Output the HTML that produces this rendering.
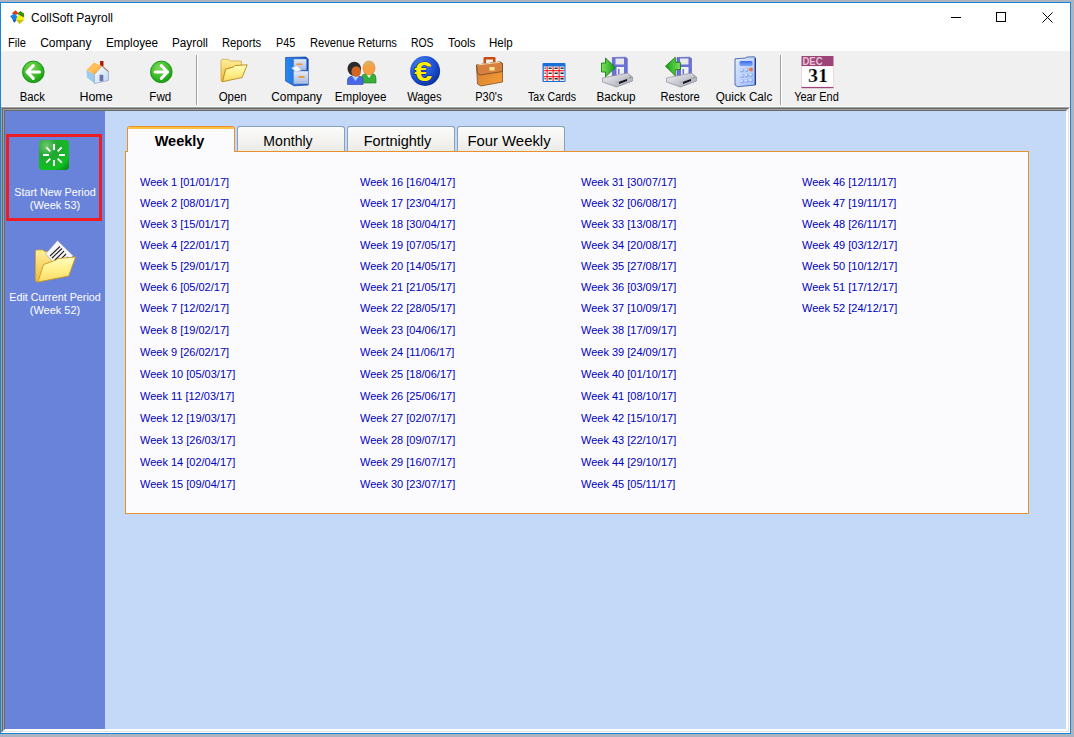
<!DOCTYPE html>
<html><head><meta charset="utf-8">
<style>
*{margin:0;padding:0;box-sizing:border-box}
html,body{width:1074px;height:737px;overflow:hidden}
body{position:relative;background:#adb4bf;font-family:"Liberation Sans",sans-serif;color:#000}
.abs{position:absolute}
#win{position:absolute;left:0;top:2px;width:1071px;height:732px;border:1px solid #1883d7;background:#fff}
#tb{position:absolute;left:1px;top:51px;width:1069px;height:55px;background:#f0f0f0}
.mi{position:absolute;top:36px;font-size:12px;white-space:nowrap;line-height:14px;transform-origin:0 0}
.btn{position:absolute;top:0;width:64px;height:56px}
.btn svg{position:absolute;left:16px;top:4px}
.lbl{position:absolute;top:38px;left:0;width:64px;text-align:center;font-size:12px;line-height:14px;white-space:nowrap}
.lbl span{display:inline-block;transform-origin:50% 0}
.sep{position:absolute;top:4px;width:2px;height:50px;border-left:1px solid #a0a0a0;border-right:1px solid #fff}
#client{position:absolute;left:1px;top:106px;width:1069px;height:627px}
#side{position:absolute;left:5px;top:111px;width:100px;height:618px;background:#6a83da}
#main{position:absolute;left:105px;top:111px;width:961px;height:618px;background:#c4d8f8}
.st{position:absolute;color:#fff;font-size:11px;line-height:13px;text-align:center;white-space:nowrap}
.tab{position:absolute;top:126px;height:26px;width:108px;font-size:14.5px;text-align:center;line-height:16px;padding-top:9px}
#panel{position:absolute;left:125px;top:151px;width:904px;height:363px;border:1px solid #e8912a;background:#fbfbfd}
.tt{font-size:14.5px;line-height:17px;text-align:center;white-space:nowrap}
.wk{position:absolute;font-size:11px;line-height:13px;color:#0000c0;white-space:nowrap}
</style></head><body>
<div id="win"></div>
<!-- title bar -->
<svg class="abs" style="left:9px;top:9px" width="16" height="16" viewBox="0 0 16 16">
 <path d="M2.8 4.4 L6.5 1.2 L9.3 4 L7.3 5.9 Z" fill="#dc3a10"/>
 <path d="M8.1 4.8 L11.4 2 L15 4.6 L15 7.3 L13.6 8.2 Z" fill="#3c8a10"/>
 <path d="M13.6 8.2 L15 7.3 L15.3 8.2 Z" fill="#403010"/>
 <path d="M1.2 7.3 L5.2 4.4 L8.6 7.7 L7.3 11.3 L5.2 13.8 L3.6 10.5 Z" fill="#1d80f0"/>
 <path d="M3.6 10.5 L7.3 11.3 L5.2 13.8 Z" fill="#1a58a8"/>
 <path d="M7.2 9.8 L9.3 5.8 L14.6 8.2 L15 10.9 L10.5 15 Z" fill="#f4f010"/>
 <path d="M7.2 11 L15 10.9 L10.5 15 Z" fill="#ccc020"/>
</svg>
<div class="abs" style="left:31px;top:11px;font-size:12px;line-height:14px;white-space:nowrap">CollSoft Payroll</div>
<!-- window controls -->
<div class="abs" style="left:951px;top:17px;width:10px;height:1px;background:#000"></div>
<div class="abs" style="left:996px;top:12px;width:10px;height:10px;border:1px solid #000"></div>
<svg class="abs" style="left:1042px;top:12px" width="11" height="11" viewBox="0 0 11 11"><path d="M0.5 0.5 L10.5 10.5 M10.5 0.5 L0.5 10.5" stroke="#000" stroke-width="1"/></svg>
<!-- menu -->
<div class="mi" style="left:8.3px;transform:scaleX(0.926)">File</div>
<div class="mi" style="left:40.2px;transform:scaleX(1.0)">Company</div>
<div class="mi" style="left:106.3px;transform:scaleX(0.974)">Employee</div>
<div class="mi" style="left:172.4px;transform:scaleX(0.978)">Payroll</div>
<div class="mi" style="left:222.2px;transform:scaleX(0.933)">Reports</div>
<div class="mi" style="left:276.3px;transform:scaleX(0.9)">P45</div>
<div class="mi" style="left:309.5px;transform:scaleX(0.931)">Revenue Returns</div>
<div class="mi" style="left:411.3px;transform:scaleX(0.868)">ROS</div>
<div class="mi" style="left:447.5px;transform:scaleX(0.982)">Tools</div>
<div class="mi" style="left:489.3px;transform:scaleX(0.964)">Help</div>
<!-- toolbar -->
<div id="tb"></div>
<!-- Back -->
<svg class="abs" style="left:16.5px;top:56px" width="32" height="32" viewBox="0 0 32 32">
 <defs>
  <radialGradient id="gg" cx="0.4" cy="0.3" r="0.75"><stop offset="0" stop-color="#7ed957"/><stop offset="0.6" stop-color="#3cb82a"/><stop offset="1" stop-color="#159a10"/></radialGradient>
 </defs>
 <circle cx="16.3" cy="15.9" r="10.8" fill="url(#gg)" stroke="#129010" stroke-width="0.9"/>
 <path d="M10 16 L16.3 9.6 M10 16 L16.3 22.4 M10 16 L22.5 16" stroke="#fff" stroke-width="3" stroke-linecap="round" fill="none"/>
</svg>
<div class="lbl abs" style="left:0.5px;top:90px"><span style="transform:scaleX(0.942)">Back</span></div>
<!-- Home -->
<svg class="abs" style="left:80.5px;top:56px" width="32" height="32" viewBox="0 0 32 32">
 <defs>
  <linearGradient id="roof" x1="0" y1="0" x2="1" y2="1"><stop offset="0" stop-color="#ffb24a"/><stop offset="0.5" stop-color="#ffc45c"/><stop offset="1" stop-color="#f08a20"/></linearGradient>
  <linearGradient id="wall" x1="0" y1="0" x2="1" y2="1"><stop offset="0" stop-color="#ffffff"/><stop offset="1" stop-color="#b8d8f0"/></linearGradient>
 </defs>
 <rect x="19" y="5" width="3.5" height="5" fill="#a8200c"/>
 <path d="M5.5 14 L6 21.5 L13.5 27.5 L13.5 18.5 Z" fill="#9ccaf0"/>
 <path d="M13.5 18.5 L21 10 L27.5 15.5 L27.5 24.5 L13.5 27.5 Z" fill="url(#wall)" stroke="#8a90c8" stroke-width="0.6"/>
 <path d="M21 10 L27.5 15.5" stroke="#b06040" stroke-width="1"/>
 <path d="M5.5 14 L13 6.5 L21 10 L13.5 18.5 Z" fill="url(#roof)"/>
 <rect x="18.6" y="18.8" width="3.7" height="6.4" fill="#7070b0"/>
</svg>
<div class="lbl abs" style="left:64.5px;top:90px"><span style="transform:scaleX(1.039)">Home</span></div>
<!-- Fwd -->
<svg class="abs" style="left:144.5px;top:56px" width="32" height="32" viewBox="0 0 32 32">
 <circle cx="16.3" cy="15.9" r="10.8" fill="url(#gg)" stroke="#129010" stroke-width="0.9"/>
 <path d="M22.6 16 L16.3 9.6 M22.6 16 L16.3 22.4 M22.6 16 L10 16" stroke="#fff" stroke-width="3" stroke-linecap="round" fill="none"/>
</svg>
<div class="lbl abs" style="left:128.5px;top:90px"><span style="transform:scaleX(0.968)">Fwd</span></div>
<div class="abs" style="left:196px;top:55px;width:1px;height:50px;background:#a0a0a0"></div>
<div class="abs" style="left:197px;top:55px;width:1px;height:50px;background:#fff"></div>
<!-- Open -->
<svg class="abs" style="left:216.5px;top:56px" width="32" height="32" viewBox="0 0 32 32">
 <defs>
  <linearGradient id="fb" x1="0" y1="0" x2="0" y2="1"><stop offset="0" stop-color="#fff09a"/><stop offset="1" stop-color="#f0b838"/></linearGradient>
  <linearGradient id="ff" x1="0" y1="0" x2="0" y2="1"><stop offset="0" stop-color="#fffcc0"/><stop offset="0.5" stop-color="#fff08a"/><stop offset="1" stop-color="#fad868"/></linearGradient>
 </defs>
 <path d="M4 5 L5 3.3 L11.5 3.3 L12.8 5 L24.4 5 L24.4 9 L8.5 13 L5.5 25.7 L4 25 Z" fill="url(#fb)" stroke="#d0a030" stroke-width="0.7"/>
 <path d="M8.7 13.2 L16.5 11 L18 9.5 L30.2 8.8 L25.1 21.5 L5.5 25.7 Z" fill="url(#ff)" stroke="#b88a10" stroke-width="0.9"/>
</svg>
<div class="lbl abs" style="left:200.5px;top:90px"><span style="transform:scaleX(0.952)">Open</span></div>
<!-- Company -->
<svg class="abs" style="left:280.5px;top:56px" width="32" height="32" viewBox="0 0 32 32">
 <defs>
  <linearGradient id="cab" x1="0" y1="0" x2="1" y2="0"><stop offset="0" stop-color="#2a8af0"/><stop offset="1" stop-color="#0a50c8"/></linearGradient>
  <linearGradient id="drw" x1="0" y1="0" x2="0" y2="1"><stop offset="0" stop-color="#e4ecfa"/><stop offset="1" stop-color="#a8b8e0"/></linearGradient>
 </defs>
 <path d="M4.6 1.5 L25 1 L27.2 3 L27.2 29 L13 29.8 L4.6 25 Z" fill="url(#cab)" stroke="#1040a8" stroke-width="0.7"/>
 <rect x="12.7" y="3" width="12.8" height="11" fill="url(#drw)" stroke="#6080c0" stroke-width="0.5"/>
 <rect x="12.5" y="15" width="14.8" height="13" fill="url(#drw)" stroke="#6080c0" stroke-width="0.5"/>
 <rect x="15.5" y="7.5" width="6" height="1.6" fill="#e89a30"/>
 <rect x="17.5" y="20" width="6" height="1.8" fill="#e89a30"/>
 <path d="M10.5 12 L16 9.5 L20.5 14 L15 16 Z" fill="#f4f8ff" stroke="#a0b4d8" stroke-width="0.5"/>
</svg>
<div class="lbl abs" style="left:264.5px;top:90px"><span style="transform:scaleX(0.988)">Company</span></div>
<!-- Employee -->
<svg class="abs" style="left:344.5px;top:56px" width="32" height="32" viewBox="0 0 32 32">
 <path d="M16.5 27 L16.5 21 Q17 18 21 17.5 L27 17.5 Q31 18 31 22 L31 27 Z" fill="#3aae3a" stroke="#1c7a1c" stroke-width="0.6"/>
 <path d="M21 17.5 L24 22 L27 17.5 Z" fill="#f4fff4"/>
 <ellipse cx="24" cy="12" rx="6" ry="7" fill="#f8a040" stroke="#c07020" stroke-width="0.5"/>
 <path d="M18 10 Q19 5 24 5 Q29.5 5 30 10 Q24 7.5 18 10 Z" fill="#d8b060"/>
 <ellipse cx="9.3" cy="12.8" rx="6.8" ry="7" fill="#2a2a2a"/>
 <path d="M2.5 28.5 L2.5 23.5 Q3 20.5 7 20 L14 20 Q18 20.5 18 23.5 L18 28.5 Z" fill="#4868e8" stroke="#2840b0" stroke-width="0.6"/>
 <path d="M7 20 L10.5 25 L14 20 Z" fill="#a8d8ff"/>
 <ellipse cx="11.2" cy="15.5" rx="4.8" ry="5.3" fill="#d06420"/>
</svg>
<div class="lbl abs" style="left:328.5px;top:90px"><span style="transform:scaleX(0.968)">Employee</span></div>
<!-- Wages -->
<svg class="abs" style="left:408.5px;top:56px" width="32" height="32" viewBox="0 0 32 32">
 <defs>
  <radialGradient id="bl" cx="0.35" cy="0.3" r="0.8"><stop offset="0" stop-color="#4a80f0"/><stop offset="0.6" stop-color="#1a50d0"/><stop offset="1" stop-color="#0a2a8a"/></radialGradient>
 </defs>
 <circle cx="16.1" cy="15" r="15" fill="url(#bl)"/>
 <text x="14.3" y="24.8" text-anchor="middle" font-family="Liberation Sans" font-weight="bold" font-size="28" fill="#fff000" stroke="#0a1a80" stroke-width="0.9" paint-order="stroke" transform="translate(15 0) scale(1.15 1) translate(-15 0)">€</text>
</svg>
<div class="lbl abs" style="left:392.5px;top:90px"><span style="transform:scaleX(0.935)">Wages</span></div>
<!-- P30's -->
<svg class="abs" style="left:472.5px;top:56px" width="32" height="32" viewBox="0 0 32 32">
 <defs>
  <linearGradient id="bc" x1="0" y1="0" x2="1" y2="1"><stop offset="0" stop-color="#d07838"/><stop offset="1" stop-color="#f8a030"/></linearGradient>
 </defs>
 <path d="M10.5 7 L10.5 2 Q10.5 1 12 1 L21.5 1 Q22.5 1 22.5 2 L22.5 6 L20 6 L20 3.5 L13 3.5 L13 7 Z" fill="#c84a10"/>
 <path d="M3.5 9 L27 6 L29.5 7.5 L29.5 26 L8 30 L4.5 28 Z" fill="url(#bc)" stroke="#704020" stroke-width="0.7"/>
 <path d="M3.5 9 L27 6 L29.5 7.5 L29.5 15.5 L7 19 L4.5 17 Z" fill="#d88040" stroke="#604020" stroke-width="0.7"/>
 <path d="M4.5 9 L27 6.2" stroke="#ffd8a0" stroke-width="1"/>
 <rect x="16.5" y="11" width="5" height="3.5" fill="#ffe890"/>
</svg>
<div class="lbl abs" style="left:456.5px;top:90px"><span style="transform:scaleX(0.917)">P30's</span></div>
<!-- Tax Cards -->
<svg class="abs" style="left:536.5px;top:56px" width="32" height="32" viewBox="0 0 32 32">
 <rect x="5.5" y="7" width="23" height="19" rx="1" fill="#1a70d8"/>
 <rect x="6.8" y="10.5" width="20.5" height="14.5" fill="#ffffff"/>
 <rect x="19" y="15" width="8.3" height="10" fill="#d8f0fc"/>
 <g fill="#000"><rect x="7.5" y="11.6" width="1.2" height="1.2"/><rect x="7.5" y="16.6" width="1.2" height="1.2"/><rect x="7.5" y="22.2" width="1.2" height="1.2"/>
 <rect x="11.5" y="11.6" width="3.2" height="1.2"/><rect x="17.5" y="11.6" width="3.2" height="1.2"/><rect x="23.5" y="11.6" width="3.2" height="1.2"/>
 <rect x="11.5" y="16.6" width="3.2" height="1.2"/><rect x="17.5" y="16.6" width="3.2" height="1.2"/><rect x="23.5" y="16.6" width="3.2" height="1.2"/>
 <rect x="11.5" y="22.2" width="3.2" height="1.2"/><rect x="17.5" y="22.2" width="3.2" height="1.2"/><rect x="23.5" y="22.2" width="3.2" height="1.2"/></g>
 <g fill="#f00"><rect x="9.6" y="10.5" width="1" height="14.5"/><rect x="15.6" y="10.5" width="1" height="14.5"/><rect x="21.6" y="10.5" width="1" height="14.5"/>
 <rect x="6.8" y="14.2" width="20.5" height="1"/><rect x="6.8" y="20.2" width="20.5" height="1"/></g>
</svg>
<div class="lbl abs" style="left:520.5px;top:90px"><span style="transform:scaleX(0.887)">Tax Cards</span></div>
<!-- Backup -->
<svg class="abs" style="left:600.5px;top:56px" width="32" height="32" viewBox="0 0 32 32">
 <defs>
  <linearGradient id="ar" x1="0" y1="0" x2="1" y2="0"><stop offset="0" stop-color="#80e060"/><stop offset="1" stop-color="#10a010"/></linearGradient>
  <linearGradient id="ar2" x1="1" y1="0" x2="0" y2="0"><stop offset="0" stop-color="#80e060"/><stop offset="1" stop-color="#10a010"/></linearGradient>
  <linearGradient id="dr" x1="0" y1="0" x2="1" y2="1"><stop offset="0" stop-color="#f4f4f4"/><stop offset="1" stop-color="#a0a0b0"/></linearGradient>
 </defs>
 <path d="M11.3 1.5 L24.5 1.2 L26.3 2.5 L26.3 19.7 L11.3 19.7 Z" fill="#6a70d8" stroke="#4048a8" stroke-width="0.5"/>
 <rect x="14.5" y="2.5" width="8.5" height="6" fill="#e8e8e8"/>
 <rect x="15.5" y="11" width="7.5" height="8.7" fill="#f0f0f0"/>
 <rect x="17" y="13" width="1.5" height="5" fill="#6a70d8"/>
 <path d="M1.5 22 L26.5 17 L31.5 21 L31.5 25 L15.5 31 L1.5 26 Z" fill="url(#dr)" stroke="#808090" stroke-width="0.6"/>
 <path d="M15.5 26.5 L31.5 21" stroke="#909098" stroke-width="0.6"/>
 <path d="M18 26 L26 23 L26 25 L18 28 Z" fill="#101010"/>
 <circle cx="29.3" cy="21.3" r="0.7" fill="#30c030"/>
 <path d="M0.5 7 L4.5 7 L4.5 2 L14.3 11.5 L4.5 20.8 L4.5 16 L0.5 16 Z" fill="url(#ar)" stroke="#087008" stroke-width="0.8"/>
</svg>
<div class="lbl abs" style="left:584.5px;top:90px"><span style="transform:scaleX(0.974)">Backup</span></div>
<!-- Restore -->
<svg class="abs" style="left:664.5px;top:56px" width="32" height="32" viewBox="0 0 32 32">
 <path d="M12 1.5 L24.5 1.2 L26.5 2.5 L26.5 19.7 L12 19.7 Z" fill="#6a70d8" stroke="#4048a8" stroke-width="0.5"/>
 <rect x="15" y="2.5" width="8.5" height="6" fill="#e8e8e8"/>
 <rect x="16" y="11" width="7.5" height="8.7" fill="#f0f0f0"/>
 <rect x="17.5" y="13" width="1.5" height="5" fill="#6a70d8"/>
 <path d="M1.5 22 L26.5 17 L31.5 21 L31.5 25 L15.5 31 L1.5 26 Z" fill="url(#dr)" stroke="#808090" stroke-width="0.6"/>
 <path d="M15.5 26.5 L31.5 21" stroke="#909098" stroke-width="0.6"/>
 <path d="M18 26 L26 23 L26 25 L18 28 Z" fill="#101010"/>
 <circle cx="29.3" cy="21.3" r="0.7" fill="#30c030"/>
 <path d="M0.5 10.2 L10.3 1.3 L10.3 6.3 L15.4 6.3 L15.4 13.7 L10.3 13.7 L10.3 19.8 Z" fill="url(#ar2)" stroke="#087008" stroke-width="0.8"/>
</svg>
<div class="lbl abs" style="left:648.5px;top:90px"><span style="transform:scaleX(0.934)">Restore</span></div>
<!-- Quick Calc -->
<svg class="abs" style="left:728.5px;top:56px" width="32" height="32" viewBox="0 0 32 32">
 <defs>
  <linearGradient id="calc" x1="0" y1="0" x2="1" y2="1"><stop offset="0" stop-color="#e0ecff"/><stop offset="1" stop-color="#a0bcf4"/></linearGradient>
  <linearGradient id="scr" x1="0" y1="0" x2="0" y2="1"><stop offset="0" stop-color="#3a6ae8"/><stop offset="1" stop-color="#80a8f8"/></linearGradient>
 </defs>
 <path d="M6 2.8 L16.5 2 L18 1 L25.5 0.8 L26.3 2 L26.3 29 L8.5 30.7 L6 29 Z" fill="url(#calc)" stroke="#3050a0" stroke-width="0.8"/><path d="M26.3 2 L26.3 29" stroke="#1a3080" stroke-width="1.2"/>
 <rect x="10.5" y="5" width="13" height="5" rx="1.5" fill="url(#scr)"/>
 <g><circle cx="13" cy="14.5" r="2" fill="#8aa6ee"/><circle cx="12.5" cy="14.0" r="1.2" fill="#dce6ff"/><circle cx="17.5" cy="14" r="2" fill="#8aa6ee"/><circle cx="17.0" cy="13.5" r="1.2" fill="#dce6ff"/><circle cx="13" cy="20" r="2" fill="#8aa6ee"/><circle cx="12.5" cy="19.5" r="1.2" fill="#dce6ff"/><circle cx="17.5" cy="19.5" r="2" fill="#8aa6ee"/><circle cx="17.0" cy="19.0" r="1.2" fill="#dce6ff"/><circle cx="22" cy="19" r="2" fill="#8aa6ee"/><circle cx="21.5" cy="18.5" r="1.2" fill="#dce6ff"/><circle cx="13" cy="25.5" r="2" fill="#8aa6ee"/><circle cx="12.5" cy="25.0" r="1.2" fill="#dce6ff"/><circle cx="17.5" cy="25" r="2" fill="#8aa6ee"/><circle cx="17.0" cy="24.5" r="1.2" fill="#dce6ff"/><circle cx="22" cy="24.5" r="2" fill="#8aa6ee"/><circle cx="21.5" cy="24.0" r="1.2" fill="#dce6ff"/></g>
 <circle cx="22" cy="13.5" r="1.9" fill="#f07048"/>
</svg>
<div class="lbl abs" style="left:712.5px;top:90px"><span style="transform:scaleX(0.976)">Quick Calc</span></div>
<div class="abs" style="left:780px;top:55px;width:1px;height:50px;background:#a0a0a0"></div>
<div class="abs" style="left:781px;top:55px;width:1px;height:50px;background:#fff"></div>
<!-- Year End -->
<svg class="abs" style="left:800.5px;top:56px" width="33" height="33" viewBox="0 0 33 33">
 <rect x="0.5" y="10" width="32" height="21" fill="#fff" stroke="#e8d0e0" stroke-width="0.8"/>
 <rect x="0.5" y="0" width="32" height="10" fill="#9c4478"/>
 <rect x="0.5" y="31" width="32" height="1.2" fill="#9c4478"/>
 <text x="1.5" y="9" font-family="Liberation Sans" font-weight="bold" font-size="10.6" fill="#e6c4d6" textLength="20" lengthAdjust="spacingAndGlyphs">DEC</text>
 <text x="7" y="26" font-family="Liberation Serif" font-weight="bold" font-size="19" fill="#000" stroke="#fff" stroke-width="0.2" textLength="20" lengthAdjust="spacingAndGlyphs">31</text>
</svg>
<div class="lbl abs" style="left:784.5px;top:90px"><span style="transform:scaleX(0.912)">Year End</span></div>

<!-- client area borders -->
<div class="abs" style="left:1px;top:106px;width:1069px;height:1px;background:#f8f8f8"></div>
<div class="abs" style="left:1px;top:107px;width:1069px;height:626px;border-top:1px solid #a0a0a0;border-left:1px solid #a0a0a0;border-bottom:1px solid #fff;border-right:1px solid #fff"></div>
<div class="abs" style="left:2px;top:108px;width:1067px;height:624px;border-top:1px solid #696969;border-left:1px solid #696969;border-bottom:1px solid #e3e3e3;border-right:1px solid #e3e3e3"></div>
<div class="abs" style="left:3px;top:109px;width:1065px;height:622px;border-top:1px solid #a0a0a0;border-left:1px solid #a0a0a0;border-bottom:1px solid #fff;border-right:1px solid #fff"></div>
<div class="abs" style="left:4px;top:110px;width:1063px;height:620px;border-top:1px solid #696969;border-left:1px solid #696969;border-bottom:1px solid #fff;border-right:1px solid #fff"></div>
<div id="side"></div>
<div id="main"></div>
<!-- side items -->
<div class="abs" style="left:6px;top:134px;width:96px;height:87px;border:3px solid #ee1c24"></div>
<svg class="abs" style="left:38px;top:139px" width="32" height="32" viewBox="0 0 32 32">
 <defs>
  <radialGradient id="sq" cx="0.25" cy="0.2" r="1"><stop offset="0" stop-color="#70c870"/><stop offset="0.35" stop-color="#20a830"/><stop offset="0.8" stop-color="#10c020"/><stop offset="1" stop-color="#089018"/></radialGradient>
 </defs>
 <rect x="1" y="1" width="30" height="30" rx="3.5" fill="url(#sq)"/>
 <g stroke="#fff" stroke-width="1.9" stroke-linecap="butt">
  <path d="M16 5 L16 11 M16 21 L16 27 M5 16 L11 16 M21 16 L27 16 M8.3 8.3 L12.3 12.3 M19.7 19.7 L23.7 23.7 M23.7 8.3 L19.7 12.3 M12.3 19.7 L8.3 23.7"/>
 </g>
</svg>
<div class="st" style="left:5px;top:186px;width:100px;transform:scaleX(0.98)">Start New Period</div><div class="st" style="left:5px;top:199px;width:100px">(Week 53)</div>
<svg class="abs" style="left:30px;top:236px" width="48" height="48" viewBox="0 0 48 48">
 <path d="M5.5 15 L6.5 14 L13 14 L14.5 15.5 L24 15.5 L24 30 L8 46 L5.5 45 Z" fill="url(#fb)" stroke="#d0a030" stroke-width="0.8"/>
 <path d="M27.5 4.4 L43.1 19.7 L31 34 L15.6 18 Z" fill="#f8f8fc" stroke="#9098a8" stroke-width="0.6"/>
 <g stroke="#202020" stroke-width="1.1"><path d="M20 20 L30 10.5 M22 22 L32 12.5 M24.5 24.5 L34 15 M27 27 L36 18 M29.5 29.5 L38 21"/></g>
 <path d="M13.6 28.5 L26 24 L28 22.5 L45.5 21 L38.7 40 L7.8 46.1 Z" fill="url(#ff)" stroke="#c89820" stroke-width="0.9"/>
</svg>
<div class="st" style="left:5px;top:291px;width:100px;transform:scaleX(0.978)">Edit Current Period</div><div class="st" style="left:5px;top:304px;width:100px">(Week 52)</div>
<!-- tabs -->
<div class="abs" style="left:237px;top:126px;width:108px;height:26px;border:1px solid #8aa0b6;border-bottom:none;border-radius:3px 3px 0 0;background:linear-gradient(#fcfcfb,#ebeae6)"></div>
<div class="abs" style="left:347px;top:126px;width:108px;height:26px;border:1px solid #8aa0b6;border-bottom:none;border-radius:3px 3px 0 0;background:linear-gradient(#fcfcfb,#ebeae6)"></div>
<div class="abs" style="left:457px;top:126px;width:108px;height:26px;border:1px solid #8aa0b6;border-bottom:none;border-radius:3px 3px 0 0;background:linear-gradient(#fcfcfb,#ebeae6)"></div>
<div id="panel"></div>
<div class="abs" style="left:127px;top:126px;width:108px;height:26px;border:1px solid #e8912a;border-bottom:none;border-radius:3px 3px 0 0;background:#fbfbfd"></div>
<div class="abs" style="left:128px;top:127px;width:106px;height:2px;background:#fdc040;border-radius:2px 2px 0 0"></div>
<div class="tt abs" style="left:125.5px;top:133px;width:108px;font-weight:bold">Weekly</div>
<div class="tt abs" style="left:233.75px;top:133px;width:108px;transform:scaleX(0.97)">Monthly</div>
<div class="tt abs" style="left:343.5px;top:133px;width:108px">Fortnightly</div>
<div class="tt abs" style="left:455px;top:133px;width:108px;transform:scaleX(1.025)">Four Weekly</div>

<div class="wk" style="left:140px;top:176px">Week 1 [01/01/17]</div>
<div class="wk" style="left:140px;top:197px">Week 2 [08/01/17]</div>
<div class="wk" style="left:140px;top:218px">Week 3 [15/01/17]</div>
<div class="wk" style="left:140px;top:239px">Week 4 [22/01/17]</div>
<div class="wk" style="left:140px;top:260px">Week 5 [29/01/17]</div>
<div class="wk" style="left:140px;top:281px">Week 6 [05/02/17]</div>
<div class="wk" style="left:140px;top:302px">Week 7 [12/02/17]</div>
<div class="wk" style="left:140px;top:324px">Week 8 [19/02/17]</div>
<div class="wk" style="left:140px;top:346px">Week 9 [26/02/17]</div>
<div class="wk" style="left:140px;top:368px">Week 10 [05/03/17]</div>
<div class="wk" style="left:140px;top:390px">Week 11 [12/03/17]</div>
<div class="wk" style="left:140px;top:412px">Week 12 [19/03/17]</div>
<div class="wk" style="left:140px;top:434px">Week 13 [26/03/17]</div>
<div class="wk" style="left:140px;top:456px">Week 14 [02/04/17]</div>
<div class="wk" style="left:140px;top:478px">Week 15 [09/04/17]</div>
<div class="wk" style="left:360px;top:176px">Week 16 [16/04/17]</div>
<div class="wk" style="left:360px;top:197px">Week 17 [23/04/17]</div>
<div class="wk" style="left:360px;top:218px">Week 18 [30/04/17]</div>
<div class="wk" style="left:360px;top:239px">Week 19 [07/05/17]</div>
<div class="wk" style="left:360px;top:260px">Week 20 [14/05/17]</div>
<div class="wk" style="left:360px;top:281px">Week 21 [21/05/17]</div>
<div class="wk" style="left:360px;top:302px">Week 22 [28/05/17]</div>
<div class="wk" style="left:360px;top:324px">Week 23 [04/06/17]</div>
<div class="wk" style="left:360px;top:346px">Week 24 [11/06/17]</div>
<div class="wk" style="left:360px;top:368px">Week 25 [18/06/17]</div>
<div class="wk" style="left:360px;top:390px">Week 26 [25/06/17]</div>
<div class="wk" style="left:360px;top:412px">Week 27 [02/07/17]</div>
<div class="wk" style="left:360px;top:434px">Week 28 [09/07/17]</div>
<div class="wk" style="left:360px;top:456px">Week 29 [16/07/17]</div>
<div class="wk" style="left:360px;top:478px">Week 30 [23/07/17]</div>
<div class="wk" style="left:581px;top:176px">Week 31 [30/07/17]</div>
<div class="wk" style="left:581px;top:197px">Week 32 [06/08/17]</div>
<div class="wk" style="left:581px;top:218px">Week 33 [13/08/17]</div>
<div class="wk" style="left:581px;top:239px">Week 34 [20/08/17]</div>
<div class="wk" style="left:581px;top:260px">Week 35 [27/08/17]</div>
<div class="wk" style="left:581px;top:281px">Week 36 [03/09/17]</div>
<div class="wk" style="left:581px;top:302px">Week 37 [10/09/17]</div>
<div class="wk" style="left:581px;top:324px">Week 38 [17/09/17]</div>
<div class="wk" style="left:581px;top:346px">Week 39 [24/09/17]</div>
<div class="wk" style="left:581px;top:368px">Week 40 [01/10/17]</div>
<div class="wk" style="left:581px;top:390px">Week 41 [08/10/17]</div>
<div class="wk" style="left:581px;top:412px">Week 42 [15/10/17]</div>
<div class="wk" style="left:581px;top:434px">Week 43 [22/10/17]</div>
<div class="wk" style="left:581px;top:456px">Week 44 [29/10/17]</div>
<div class="wk" style="left:581px;top:478px">Week 45 [05/11/17]</div>
<div class="wk" style="left:802px;top:176px">Week 46 [12/11/17]</div>
<div class="wk" style="left:802px;top:197px">Week 47 [19/11/17]</div>
<div class="wk" style="left:802px;top:218px">Week 48 [26/11/17]</div>
<div class="wk" style="left:802px;top:239px">Week 49 [03/12/17]</div>
<div class="wk" style="left:802px;top:260px">Week 50 [10/12/17]</div>
<div class="wk" style="left:802px;top:281px">Week 51 [17/12/17]</div>
<div class="wk" style="left:802px;top:302px">Week 52 [24/12/17]</div>
</body></html>
